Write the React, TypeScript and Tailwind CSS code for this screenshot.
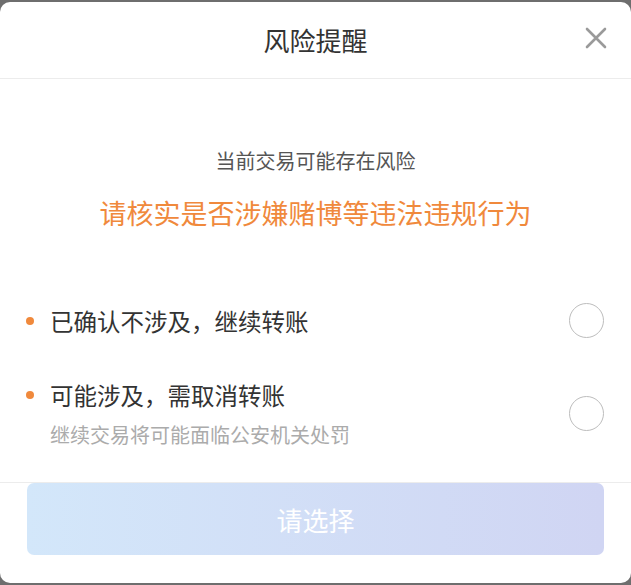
import React from 'react';

const options = [
  { id: 'safe', label: '已确认不涉及，继续转账' },
  { id: 'risk', label: '可能涉及，需取消转账', hint: '继续交易将可能面临公安机关处罚' },
];

export default function App() {
  return (
    <div
      className="h-[585px] w-[631px] overflow-hidden bg-[#6e6e6e] pt-[2px]"
      style={{ fontFamily: '"Noto Sans CJK SC", "Noto Sans", sans-serif' }}
    >
      <div className="flex h-[581px] flex-col rounded-[10px] bg-white">
        {/* Header */}
        <div className="relative flex h-[77px] items-center justify-center border-b border-[#ececec]">
          <h2 className="text-[26px] leading-none text-[#333]">风险提醒</h2>
          <button className="absolute right-[24px] top-[25px] text-[#9a9a9a]">
            <svg width="22" height="22" viewBox="0 0 22 22" fill="none" stroke="currentColor" strokeWidth="2.6" strokeLinecap="round">
              <path d="M2 2 L20 20 M20 2 L2 20" />
            </svg>
          </button>
        </div>

        {/* Body */}
        <div className="flex-1">
          <p className="mt-[68px] text-center text-[20px] leading-[27px] text-[#555]">当前交易可能存在风险</p>
          <p className="mt-[20px] text-center text-[27px] leading-[37px] text-[#f0893c]">请核实是否涉嫌赌博等违法违规行为</p>

          <div className="mt-[72px] flex flex-col gap-[41px] pl-[26px] pr-[27px]">
            {options.map((opt) => (
              <div key={opt.id} className="flex items-center justify-between">
                <div>
                  <div className="flex items-center gap-[16px]">
                    <span className="h-[8px] w-[8px] rounded-full bg-[#f0893c]" />
                    <span className="text-[23.5px] leading-[32px] text-[#333]">{opt.label}</span>
                  </div>
                  {opt.hint && (
                    <p className="mt-[10px] pl-[24px] text-[20px] leading-[27px] text-[#ababab]">{opt.hint}</p>
                  )}
                </div>
                <span className="h-[35px] w-[35px] rounded-full border-[1.5px] border-[#bdbdbd]" />
              </div>
            ))}
          </div>
        </div>

        {/* Footer */}
        <div className="h-[101px] border-t border-[#ececec] px-[27px]">
          <button className="h-[72px] w-full rounded-[7px] bg-gradient-to-r from-[#d3e7fa] to-[#d0d5f3] text-[26px] text-white">
            请选择
          </button>
        </div>
      </div>
    </div>
  );
}
